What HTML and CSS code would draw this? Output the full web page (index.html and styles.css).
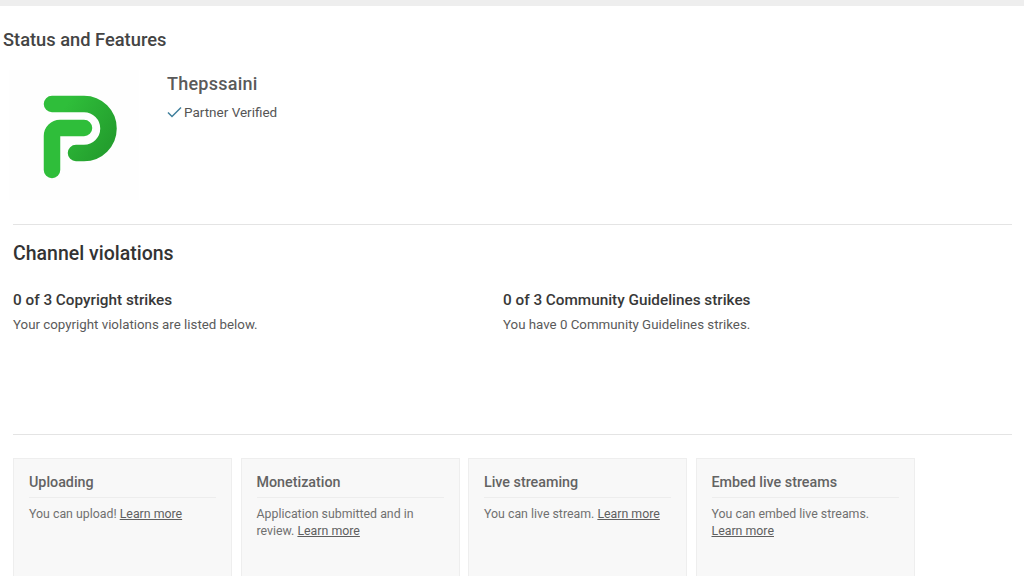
FILE: index.html
```html
<!DOCTYPE html>
<html lang="en">
<head>
<meta charset="utf-8">
<title>Status and Features</title>
<link rel="stylesheet" href="styles.css">
</head>
<body>
<div class="topbar"></div>
<h1 class="page-title">Status and Features</h1>
<section class="profile">
  <div class="logo">
    <svg width="130" height="130" viewBox="0 0 130 130" aria-hidden="true">
      <defs>
        <linearGradient id="pg" gradientUnits="userSpaceOnUse" x1="60" y1="30" x2="108" y2="60">
          <stop offset="0" stop-color="#2fbe3a"/>
          <stop offset="1" stop-color="#249f2e"/>
        </linearGradient>
      </defs>
      <path class="logo-a" d="M43 34H75A24.500 24.500 0 0 1 75 83H67" stroke="url(#pg)"/>
      <path class="logo-b" d="M43 100V66a8 8 0 0 1 8-8H75"/>
    </svg>
  </div>
  <div class="identity">
    <div class="channel-name">Thepssaini</div>
    <div class="verified">
      <svg width="15" height="12" viewBox="0 0 15 12" aria-hidden="true"><path d="M1 6.500L5 10.500L14 1.500" fill="none" stroke="#3f7f9c" stroke-width="1.500"/></svg>
      <span>Partner Verified</span>
    </div>
  </div>
</section>
<main class="content">
  <section class="violations">
    <h2>Channel violations</h2>
    <div class="strikes">
      <div class="strike">
        <h3>0 of 3 Copyright strikes</h3>
        <p>Your copyright violations are listed below.</p>
      </div>
      <div class="strike">
        <h3>0 of 3 Community Guidelines strikes</h3>
        <p>You have 0 Community Guidelines strikes.</p>
      </div>
    </div>
  </section>
  <section class="cards">
    <article class="card">
      <h4>Uploading</h4>
      <p>You can upload! <a href="#">Learn more</a></p>
    </article>
    <article class="card">
      <h4>Monetization</h4>
      <p>Application submitted and in review. <a href="#">Learn more</a></p>
    </article>
    <article class="card">
      <h4>Live streaming</h4>
      <p>You can live stream. <a href="#">Learn more</a></p>
    </article>
    <article class="card">
      <h4>Embed live streams</h4>
      <p>You can embed live streams. <a href="#">Learn more</a></p>
    </article>
  </section>
</main>
</body>
</html>
```
FILE: styles.css
```css
* { box-sizing: border-box; }
html, body { margin: 0; height: 576px; overflow: hidden; }
body { background: #fff; font-family: Roboto, "Liberation Sans", sans-serif; color: #333; }
h1, h2, h3, h4, p { margin: 0; }
.topbar { height: 6px; background: #eeeeee; }
.page-title { margin: 24px 0 0 3px; font-size: 18.300px; line-height: 20px; font-weight: 500; color: #444; }
.profile { display: flex; margin: 20px 0 0 9px; height: 154px; }
.logo { width: 130px; height: 130px; background: #fefefe; }
.logo svg { display: block; }
.logo-a, .logo-b { fill: none; stroke-width: 16.500; stroke-linecap: round; }
.logo-b { stroke: #2fbe3a; }
.identity { margin-left: 28px; padding-top: 3px; }
.channel-name { font-size: 18px; line-height: 22px; font-weight: 500; color: #5a5a5a; letter-spacing: 0.25px; }
.verified { display: flex; align-items: center; gap: 2px; margin-top: 8px; font-size: 13.500px; line-height: 18px; color: #555; }
.content { margin: 0 12px 0 13px; }
.violations { border-top: 1px solid #e4e4e4; border-bottom: 1px solid #e4e4e4; height: 211px; padding-top: 17px; }
.violations h2 { font-size: 19.500px; line-height: 24px; font-weight: 500; color: #333; }
.strikes { display: flex; margin-top: 25px; }
.strike { width: 490px; }
.strike h3 { font-size: 15.300px; line-height: 18px; font-weight: 500; color: #383838; }
.strike p { margin-top: 8px; font-size: 13.300px; line-height: 16px; color: #5a5a5a; }
.cards { display: flex; gap: 8.500px; margin-top: 23px; }
.card { width: 219px; height: 130px; flex: none; background: #f8f8f8; border: 1px solid #eeeeee; padding: 14px 15px 0 15px; }
.card h4 { font-size: 14.300px; line-height: 18px; font-weight: 500; color: #636363; padding-bottom: 6px; border-bottom: 1px solid #ededed; }
.card p { margin-top: 8px; font-size: 12.350px; line-height: 17px; color: #707070; }
.card a { color: #5f5f5f; text-decoration: underline; }
```
